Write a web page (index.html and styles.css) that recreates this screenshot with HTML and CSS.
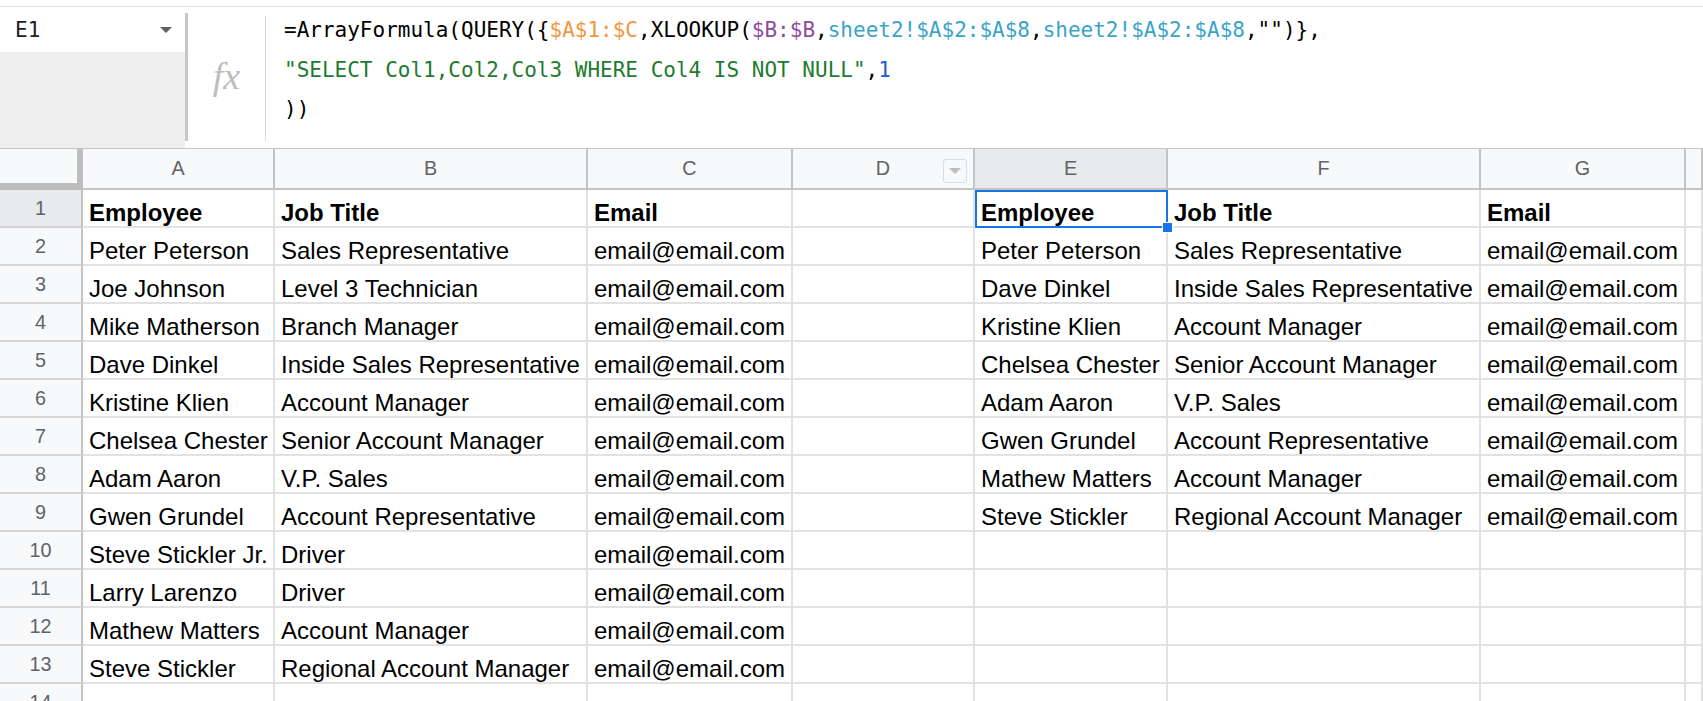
FILE: index.html
```html
<!DOCTYPE html>
<html>
<head>
<meta charset="utf-8">
<link rel="stylesheet" href="styles.css">
</head>
<body>
<div class="fbar">
  <div class="namebox-col">
    <div class="namebox"><span>E1</span><span class="caret"></span></div>
    <div class="namebox-fill"></div>
  </div>
  <div class="divider"></div>
  <div class="fx">fx</div>
  <div class="fx-line"></div>
<div class="formula">=ArrayFormula(QUERY({<span class="r1">$A$1:$C</span>,XLOOKUP(<span class="r2">$B:$B</span>,<span class="r3">sheet2!$A$2:$A$8</span>,<span class="r3">sheet2!$A$2:$A$8</span>,"")},
<span class="str">"SELECT Col1,Col2,Col3 WHERE Col4 IS NOT NULL"</span>,<span class="num">1</span>
))</div>
</div>

<div class="grid">
  <div class="corner"></div>
  <div class="ch">A</div>
  <div class="ch">B</div>
  <div class="ch">C</div>
  <div class="ch ch-d">D<span class="filter-btn"><span class="filter-caret"></span></span></div>
  <div class="ch ch-sel">E</div>
  <div class="ch">F</div>
  <div class="ch">G</div>
  <div class="ch"></div>

  <div class="rh rh-sel">1</div>
  <div class="c b">Employee</div><div class="c b">Job Title</div><div class="c b">Email</div><div class="c"></div>
  <div class="c b sel">Employee<span class="sel-box"></span><span class="sel-handle"></span></div><div class="c b">Job Title</div><div class="c b">Email</div><div class="c"></div>

  <div class="rh">2</div>
  <div class="c">Peter Peterson</div><div class="c">Sales Representative</div><div class="c">email@email.com</div><div class="c"></div>
  <div class="c">Peter Peterson</div><div class="c">Sales Representative</div><div class="c">email@email.com</div><div class="c"></div>

  <div class="rh">3</div>
  <div class="c">Joe Johnson</div><div class="c">Level 3 Technician</div><div class="c">email@email.com</div><div class="c"></div>
  <div class="c">Dave Dinkel</div><div class="c">Inside Sales Representative</div><div class="c">email@email.com</div><div class="c"></div>

  <div class="rh">4</div>
  <div class="c">Mike Matherson</div><div class="c">Branch Manager</div><div class="c">email@email.com</div><div class="c"></div>
  <div class="c">Kristine Klien</div><div class="c">Account Manager</div><div class="c">email@email.com</div><div class="c"></div>

  <div class="rh">5</div>
  <div class="c">Dave Dinkel</div><div class="c">Inside Sales Representative</div><div class="c">email@email.com</div><div class="c"></div>
  <div class="c">Chelsea Chester</div><div class="c">Senior Account Manager</div><div class="c">email@email.com</div><div class="c"></div>

  <div class="rh">6</div>
  <div class="c">Kristine Klien</div><div class="c">Account Manager</div><div class="c">email@email.com</div><div class="c"></div>
  <div class="c">Adam Aaron</div><div class="c">V.P. Sales</div><div class="c">email@email.com</div><div class="c"></div>

  <div class="rh">7</div>
  <div class="c">Chelsea Chester</div><div class="c">Senior Account Manager</div><div class="c">email@email.com</div><div class="c"></div>
  <div class="c">Gwen Grundel</div><div class="c">Account Representative</div><div class="c">email@email.com</div><div class="c"></div>

  <div class="rh">8</div>
  <div class="c">Adam Aaron</div><div class="c">V.P. Sales</div><div class="c">email@email.com</div><div class="c"></div>
  <div class="c">Mathew Matters</div><div class="c">Account Manager</div><div class="c">email@email.com</div><div class="c"></div>

  <div class="rh">9</div>
  <div class="c">Gwen Grundel</div><div class="c">Account Representative</div><div class="c">email@email.com</div><div class="c"></div>
  <div class="c">Steve Stickler</div><div class="c">Regional Account Manager</div><div class="c">email@email.com</div><div class="c"></div>

  <div class="rh">10</div>
  <div class="c">Steve Stickler Jr.</div><div class="c">Driver</div><div class="c">email@email.com</div><div class="c"></div>
  <div class="c"></div><div class="c"></div><div class="c"></div><div class="c"></div>

  <div class="rh">11</div>
  <div class="c">Larry Larenzo</div><div class="c">Driver</div><div class="c">email@email.com</div><div class="c"></div>
  <div class="c"></div><div class="c"></div><div class="c"></div><div class="c"></div>

  <div class="rh">12</div>
  <div class="c">Mathew Matters</div><div class="c">Account Manager</div><div class="c">email@email.com</div><div class="c"></div>
  <div class="c"></div><div class="c"></div><div class="c"></div><div class="c"></div>

  <div class="rh">13</div>
  <div class="c">Steve Stickler</div><div class="c">Regional Account Manager</div><div class="c">email@email.com</div><div class="c"></div>
  <div class="c"></div><div class="c"></div><div class="c"></div><div class="c"></div>

  <div class="rh">14</div>
  <div class="c"></div><div class="c"></div><div class="c"></div><div class="c"></div>
  <div class="c"></div><div class="c"></div><div class="c"></div><div class="c"></div>
</div>
</body>
</html>
```

FILE: styles.css
```css
* { box-sizing: border-box; }

body {
  margin: 0;
  width: 1703px;
  height: 701px;
  overflow: hidden;
  background: #ffffff;
  font-family: "Liberation Sans", Arial, sans-serif;
  color: #000000;
}

/* ---------- formula bar ---------- */
.fbar {
  margin-top: 6px;
  border-top: 1px solid #e0e0e0;
  height: 142px;
  display: flex;
}

.namebox-col {
  width: 185px;
  display: flex;
  flex-direction: column;
}

.namebox {
  height: 45px;
  display: flex;
  align-items: center;
  justify-content: space-between;
  padding: 0 13px 0 15px;
  font-family: "DejaVu Sans Mono", "Liberation Mono", monospace;
  font-size: 21px;
  color: #202124;
}

.caret {
  width: 0;
  height: 0;
  border-left: 6px solid transparent;
  border-right: 6px solid transparent;
  border-top: 6px solid #5f6368;
}

.namebox-fill {
  flex: 1;
  background: #eeeeee;
}

.divider {
  width: 3px;
  background: #c6c6c6;
  margin: 6px 0 7px;
}

.fx {
  width: 77px;
  display: flex;
  align-items: center;
  justify-content: center;
  font-family: "Liberation Serif", "Times New Roman", serif;
  font-style: italic;
  font-size: 38px;
  color: #bdbdbd;
  padding-bottom: 4px;
}

.fx-line {
  width: 1px;
  background: #dadce0;
  margin: 9px 0 7px;
}

.formula {
  padding: 4px 0 0 18px;
  font-family: "DejaVu Sans Mono", "Liberation Mono", monospace;
  font-size: 21px;
  line-height: 39.6px;
  white-space: pre;
  color: #000000;
}

.r1 { color: #f5963f; }
.r2 { color: #8e4b9f; }
.r3 { color: #3aa3c9; }
.str { color: #1e7b2f; }
.num { color: #1f5cd6; }

/* ---------- grid ---------- */
.grid {
  display: grid;
  grid-template-columns: 83px 192px 313px 205px 182px 193px 313px 205px 17px;
  grid-template-rows: 41px repeat(14, 38px);
  border-top: 1px solid #c4c4c4;
}

.corner {
  background: #f8f9fa;
  border-right: 6px solid #bdbdbd;
  border-bottom: 7px solid #bdbdbd;
}

.ch {
  background: #f8f9fa;
  border-right: 2px solid #c4c4c4;
  border-bottom: 2px solid #c4c4c4;
  display: flex;
  align-items: center;
  justify-content: center;
  font-size: 19.8px;
  color: #5f6368;
}

.ch-sel { background: #e8eaed; }

.ch-d { position: relative; }

.filter-btn {
  position: absolute;
  right: 6px;
  top: 10px;
  width: 24px;
  height: 24px;
  border: 1px solid #dadce0;
  border-radius: 3px;
  background: #f8f9fa;
  display: flex;
  align-items: center;
  justify-content: center;
}

.filter-caret {
  width: 0;
  height: 0;
  border-left: 6px solid transparent;
  border-right: 6px solid transparent;
  border-top: 6px solid #bdbdbd;
}

.rh {
  background: #f8f9fa;
  border-right: 2px solid #c4c4c4;
  border-bottom: 2px solid #d4d4d4;
  display: flex;
  align-items: center;
  justify-content: center;
  font-size: 19.8px;
  color: #5f6368;
}

.rh-sel { background: #e8eaed; }

.c {
  border-right: 2px solid #e2e2e2;
  border-bottom: 2px solid #e2e2e2;
  display: flex;
  align-items: flex-end;
  padding-left: 6px;
  padding-bottom: 1px;
  font-size: 24px;
  line-height: 24px;
  white-space: nowrap;
  overflow: hidden;
}

.b { font-weight: bold; }

.sel {
  position: relative;
  overflow: visible;
}

.sel-box {
  position: absolute;
  top: 0;
  left: 0;
  right: -2px;
  bottom: -2px;
  border: 2px solid #1a73e8;
  pointer-events: none;
}

.sel-handle {
  position: absolute;
  right: -7px;
  bottom: -7px;
  width: 11px;
  height: 11px;
  background: #1a73e8;
  border: 1px solid #ffffff;
  z-index: 2;
}
```
